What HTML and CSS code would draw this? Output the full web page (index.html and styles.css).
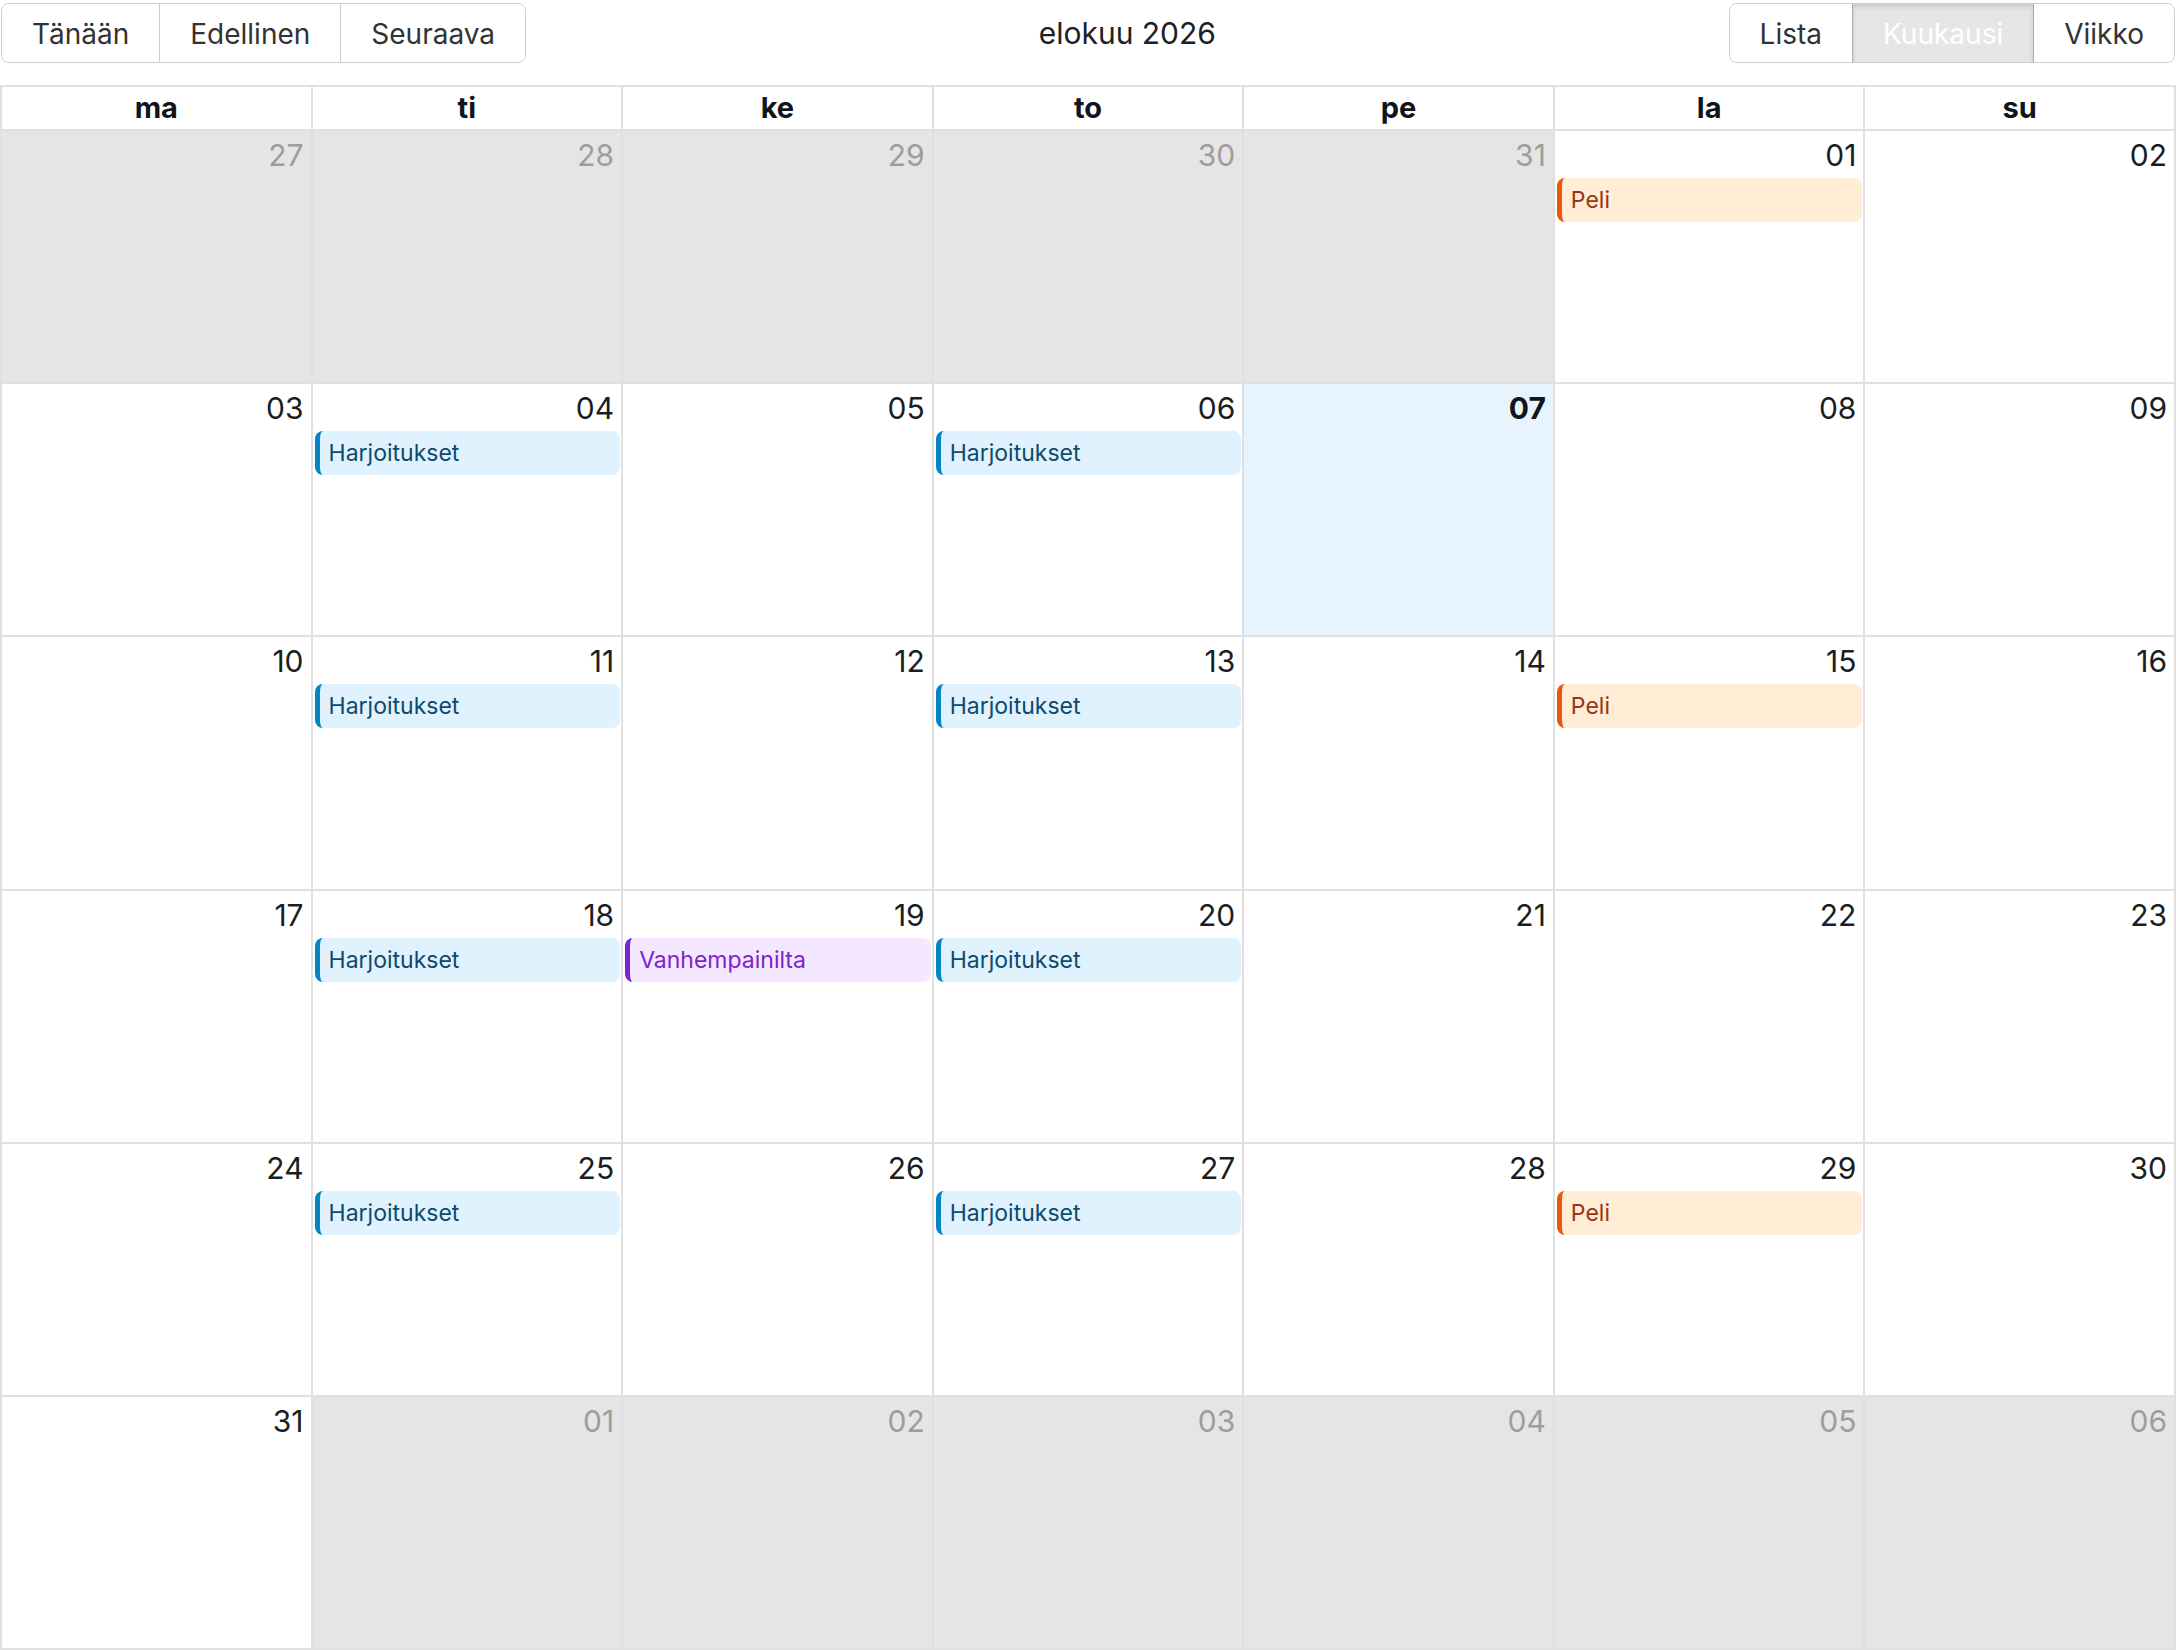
FILE: index.html
```html
<!DOCTYPE html>
<html lang="fi">
<head>
<meta charset="utf-8">
<title>elokuu 2026</title>
<link rel="stylesheet" href="styles.css">
</head>
<body>
<div class="page">
  <div class="toolbar">
    <div class="btn-group">
      <button class="btn">Tänään</button>
      <button class="btn">Edellinen</button>
      <button class="btn">Seuraava</button>
    </div>
    <h2 class="title">elokuu 2026</h2>
    <div class="btn-group">
      <button class="btn">Lista</button>
      <button class="btn active">Kuukausi</button>
      <button class="btn">Viikko</button>
    </div>
  </div>

  <div class="calendar">
    <div class="head">
      <div class="dow">ma</div><div class="dow">ti</div><div class="dow">ke</div><div class="dow">to</div><div class="dow">pe</div><div class="dow">la</div><div class="dow">su</div>
    </div>
    <div class="month">
      <div class="day other"><div class="num">27</div></div>
      <div class="day other"><div class="num">28</div></div>
      <div class="day other"><div class="num">29</div></div>
      <div class="day other"><div class="num">30</div></div>
      <div class="day other"><div class="num">31</div></div>
      <div class="day"><div class="num">01</div><div class="event game">Peli</div></div>
      <div class="day"><div class="num">02</div></div>

      <div class="day"><div class="num">03</div></div>
      <div class="day"><div class="num">04</div><div class="event practice">Harjoitukset</div></div>
      <div class="day"><div class="num">05</div></div>
      <div class="day"><div class="num">06</div><div class="event practice">Harjoitukset</div></div>
      <div class="day today"><div class="num">07</div></div>
      <div class="day"><div class="num">08</div></div>
      <div class="day"><div class="num">09</div></div>

      <div class="day"><div class="num">10</div></div>
      <div class="day"><div class="num">11</div><div class="event practice">Harjoitukset</div></div>
      <div class="day"><div class="num">12</div></div>
      <div class="day"><div class="num">13</div><div class="event practice">Harjoitukset</div></div>
      <div class="day"><div class="num">14</div></div>
      <div class="day"><div class="num">15</div><div class="event game">Peli</div></div>
      <div class="day"><div class="num">16</div></div>

      <div class="day"><div class="num">17</div></div>
      <div class="day"><div class="num">18</div><div class="event practice">Harjoitukset</div></div>
      <div class="day"><div class="num">19</div><div class="event parents">Vanhempainilta</div></div>
      <div class="day"><div class="num">20</div><div class="event practice">Harjoitukset</div></div>
      <div class="day"><div class="num">21</div></div>
      <div class="day"><div class="num">22</div></div>
      <div class="day"><div class="num">23</div></div>

      <div class="day"><div class="num">24</div></div>
      <div class="day"><div class="num">25</div><div class="event practice">Harjoitukset</div></div>
      <div class="day"><div class="num">26</div></div>
      <div class="day"><div class="num">27</div><div class="event practice">Harjoitukset</div></div>
      <div class="day"><div class="num">28</div></div>
      <div class="day"><div class="num">29</div><div class="event game">Peli</div></div>
      <div class="day"><div class="num">30</div></div>

      <div class="day"><div class="num">31</div></div>
      <div class="day other"><div class="num">01</div></div>
      <div class="day other"><div class="num">02</div></div>
      <div class="day other"><div class="num">03</div></div>
      <div class="day other"><div class="num">04</div></div>
      <div class="day other"><div class="num">05</div></div>
      <div class="day other"><div class="num">06</div></div>
    </div>
  </div>
</div>
</body>
</html>
```

FILE: styles.css
```css
* { box-sizing: border-box; }

html, body {
  margin: 0;
  padding: 0;
  background: #ffffff;
  font-family: Inter, "Noto Sans", "Liberation Sans", sans-serif;
  color: #212529;
}

.page {
  height: 100vh;
  display: flex;
  flex-direction: column;
}

.toolbar {
  display: flex;
  justify-content: space-between;
  align-items: center;
  padding: 3px 1px 0 1px;
  height: 63px;
  margin-bottom: 22px;
}

.btn-group {
  display: flex;
  border: 1px solid #cccccc;
  border-radius: 8px;
  overflow: hidden;
  height: 60px;
}

.btn {
  font-family: inherit;
  font-size: 28px;
  color: #333333;
  background: #ffffff;
  border: none;
  border-left: 1px solid #cccccc;
  padding: 0 30px;
  margin: 0;
  line-height: 60px;
  height: 58px;
}

.btn:first-child { border-left: none; }

.btn.active {
  background: #e6e6e6;
  color: #ffffff;
  border-left: 1px solid #adadad;
  border-right: 1px solid #adadad;
  box-shadow: inset 0 3px 5px rgba(0, 0, 0, 0.125);
}

.btn.active + .btn { border-left: none; }

.title {
  margin: 0;
  font-size: 30px;
  font-weight: 400;
  color: #1d2125;
  line-height: 42px;
}

.calendar {
  flex: 1;
  display: flex;
  flex-direction: column;
  border-top: 2px solid #e0e0e0;
  border-left: 2px solid #e0e0e0;
}

.head {
  display: grid;
  grid-template-columns: repeat(7, 1fr);
  height: 44px;
}

.dow {
  border-right: 2px solid #e0e0e0;
  border-bottom: 2px solid #e0e0e0;
  text-align: center;
  font-weight: 700;
  font-size: 29px;
  line-height: 42px;
  color: #111418;
}

.month {
  flex: 1;
  display: grid;
  grid-template-columns: repeat(7, 1fr);
  grid-template-rows: repeat(6, 1fr);
}

.day {
  border-right: 2px solid #e0e0e0;
  border-bottom: 2px solid #e0e0e0;
  display: flex;
  flex-direction: column;
  min-height: 0;
}

.day.other { background: #e5e5e5; }
.day.today { background: #e8f4fd; }

.num {
  text-align: right;
  font-size: 30px;
  line-height: 39px;
  padding: 5px 7px 0 0;
  color: #1a1e22;
}

.day.other .num { color: #9d9d9d; }
.day.today .num { font-weight: 700; color: #111418; }

.event {
  margin: 3px 1px 0 2px;
  height: 44px;
  line-height: 44px;
  font-size: 23px;
  padding-left: 9px;
  border-radius: 8px;
  border-left: 5px solid;
  white-space: nowrap;
  overflow: hidden;
}

.event.practice {
  background: #e0f2fe;
  border-left-color: #0284c7;
  color: #0c4a6e;
}

.event.game {
  background: #ffedd5;
  border-left-color: #ea580c;
  color: #9a3412;
}

.event.parents {
  background: #f3e8ff;
  border-left-color: #7e22ce;
  color: #7e22ce;
}
```
